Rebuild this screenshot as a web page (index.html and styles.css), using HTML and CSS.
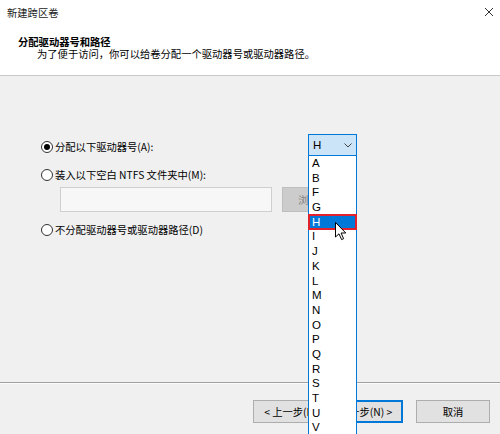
FILE: index.html
```html
<!DOCTYPE html>
<html lang="zh-CN">
<head>
    <meta charset="UTF-8">
    <title>新建跨区卷</title>
    <link rel="stylesheet" href="styles.css">
</head>
<body>
    <div class="window">
        <div class="titlebar">
            <span class="title">新建跨区卷</span>
            <svg class="close" width="10" height="10" viewBox="0 0 10 10">
                <path d="M1 1 L9 9 M9 1 L1 9" stroke="#333" stroke-width="1" fill="none"/>
            </svg>
        </div>

        <div class="header">
            <div class="header-title">分配驱动器号和路径</div>
            <div class="header-desc">为了便于访问，你可以给卷分配一个驱动器号或驱动器路径。</div>
        </div>

        <div class="content">
            <div class="row first">
                <label class="option">
                    <span class="radio checked"></span>
                    分配以下驱动器号(A):
                </label>
                <div class="combo">
                    <span>H</span>
                    <svg width="8" height="5" viewBox="0 0 8 5">
                        <path d="M0.5 0.5 L4 4 L7.5 0.5" stroke="#444" stroke-width="1" fill="none"/>
                    </svg>
                </div>
            </div>

            <label class="option second">
                <span class="radio"></span>
                装入以下空白 NTFS 文件夹中(M):
            </label>
            <div class="path-row">
                <div class="textbox"></div>
                <div class="btn disabled">浏览(R)...</div>
            </div>

            <label class="option third">
                <span class="radio"></span>
                不分配驱动器号或驱动器路径(D)
            </label>
        </div>

        <div class="divider"></div>

        <div class="footer">
            <div class="btn">&lt; 上一步(B)</div>
            <div class="btn default">下一步(N) &gt;</div>
            <div class="btn cancel">取消</div>
        </div>

        <!-- 展开的驱动器号列表 -->
        <ul class="droplist">
            <li>A</li>
            <li>B</li>
            <li>F</li>
            <li>G</li>
            <li class="selected">H</li>
            <li>I</li>
            <li>J</li>
            <li>K</li>
            <li>L</li>
            <li>M</li>
            <li>N</li>
            <li>O</li>
            <li>P</li>
            <li>Q</li>
            <li>R</li>
            <li>S</li>
            <li>T</li>
            <li>U</li>
            <li>V</li>
        </ul>

        <svg class="cursor" width="12" height="19" viewBox="0 0 12 19">
            <path d="M0.5 0.5 L0.5 15 L4 11.8 L6.6 17.6 L8.6 16.7 L6.1 11 L10.8 11 Z" fill="#fff" stroke="#000" stroke-width="1" stroke-linejoin="round"/>
        </svg>
    </div>
</body>
</html>
```

FILE: styles.css
```css
* {
    box-sizing: border-box;
}

body {
    margin: 0;
    font-family: "Noto Sans CJK SC", "Microsoft YaHei", sans-serif;
    font-size: 10.3px;
    color: #000;
}

.window {
    position: relative;
    width: 500px;
    height: 434px;
    overflow: hidden;
    background-color: #f0f0f0;
}

.titlebar {
    height: 26px;
    background-color: #fff;
    display: flex;
    align-items: center;
    justify-content: space-between;
    padding: 0 7px 2px 7px;
    color: #222;
}

.close {
    margin-right: -1px;
}

.header {
    height: 50px;
    background-color: #fff;
    border-bottom: 1px solid #c8c8c8;
    padding: 9px 0 0 18px;
}

.header-title {
    font-weight: bold;
    line-height: 13px;
}

.header-desc {
    margin-left: 19px;
    line-height: 13px;
    margin-top: -1px;
}

.content {
    height: 306px;
    padding: 58px 0 0 41px;
}

.row {
    display: flex;
    align-items: center;
    justify-content: space-between;
    width: 316px;
}

.option {
    display: flex;
    align-items: center;
    gap: 2px;
    height: 14px;
    line-height: 14px;
}

.first .option {
    margin-top: 4px;
}

.radio {
    width: 12px;
    height: 12px;
    border: 1px solid #333;
    border-radius: 50%;
    background-color: #fff;
    display: flex;
    align-items: center;
    justify-content: center;
}

.radio.checked::after {
    content: "";
    width: 6px;
    height: 6px;
    border-radius: 50%;
    background-color: #000;
}

.combo {
    width: 49px;
    height: 22px;
    background-color: #cce4f7;
    border: 1px solid #0078d7;
    display: flex;
    align-items: center;
    justify-content: space-between;
    padding: 0 4px 0 4px;
    font-family: "Liberation Sans", Arial, sans-serif;
    font-size: 11.5px;
}

.second {
    margin-top: 12px;
}

.path-row {
    display: flex;
    gap: 10px;
    margin: 5px 0 0 19px;
}

.textbox {
    width: 212px;
    height: 25px;
    background-color: #f7f7f7;
    border: 1px solid #cfcfcf;
}

.btn {
    width: 75px;
    height: 23px;
    border: 1px solid #adadad;
    background-color: #e1e1e1;
    display: flex;
    align-items: center;
    justify-content: center;
}

.btn.disabled {
    height: 25px;
    background-color: #cccccc;
    border-color: #bfbfbf;
    color: #838383;
}

.third {
    margin-top: 11px;
}

.divider {
    border-top: 1px solid #a0a0a0;
    border-bottom: 1px solid #fbfbfb;
}

.footer {
    display: flex;
    padding: 16px 0 0 253px;
}

.btn.default {
    border: 2px solid #0078d7;
}

.btn.cancel {
    margin-left: 13px;
    width: 74px;
}

.droplist {
    position: absolute;
    left: 308px;
    top: 156px;
    width: 49px;
    margin: 0;
    padding: 0;
    list-style: none;
    background-color: #fff;
    border: 1px solid #0078d7;
    border-top: none;
    font-family: "Liberation Sans", Arial, sans-serif;
    font-size: 11.5px;
}

.droplist li {
    height: 14.7px;
    line-height: 14.7px;
    padding-left: 3px;
}

.droplist li.selected {
    background-color: #0078d7;
    color: #fff;
    outline: 2px solid #e3212d;
    outline-offset: -1px;
}

.cursor {
    position: absolute;
    left: 335px;
    top: 222px;
}
```
